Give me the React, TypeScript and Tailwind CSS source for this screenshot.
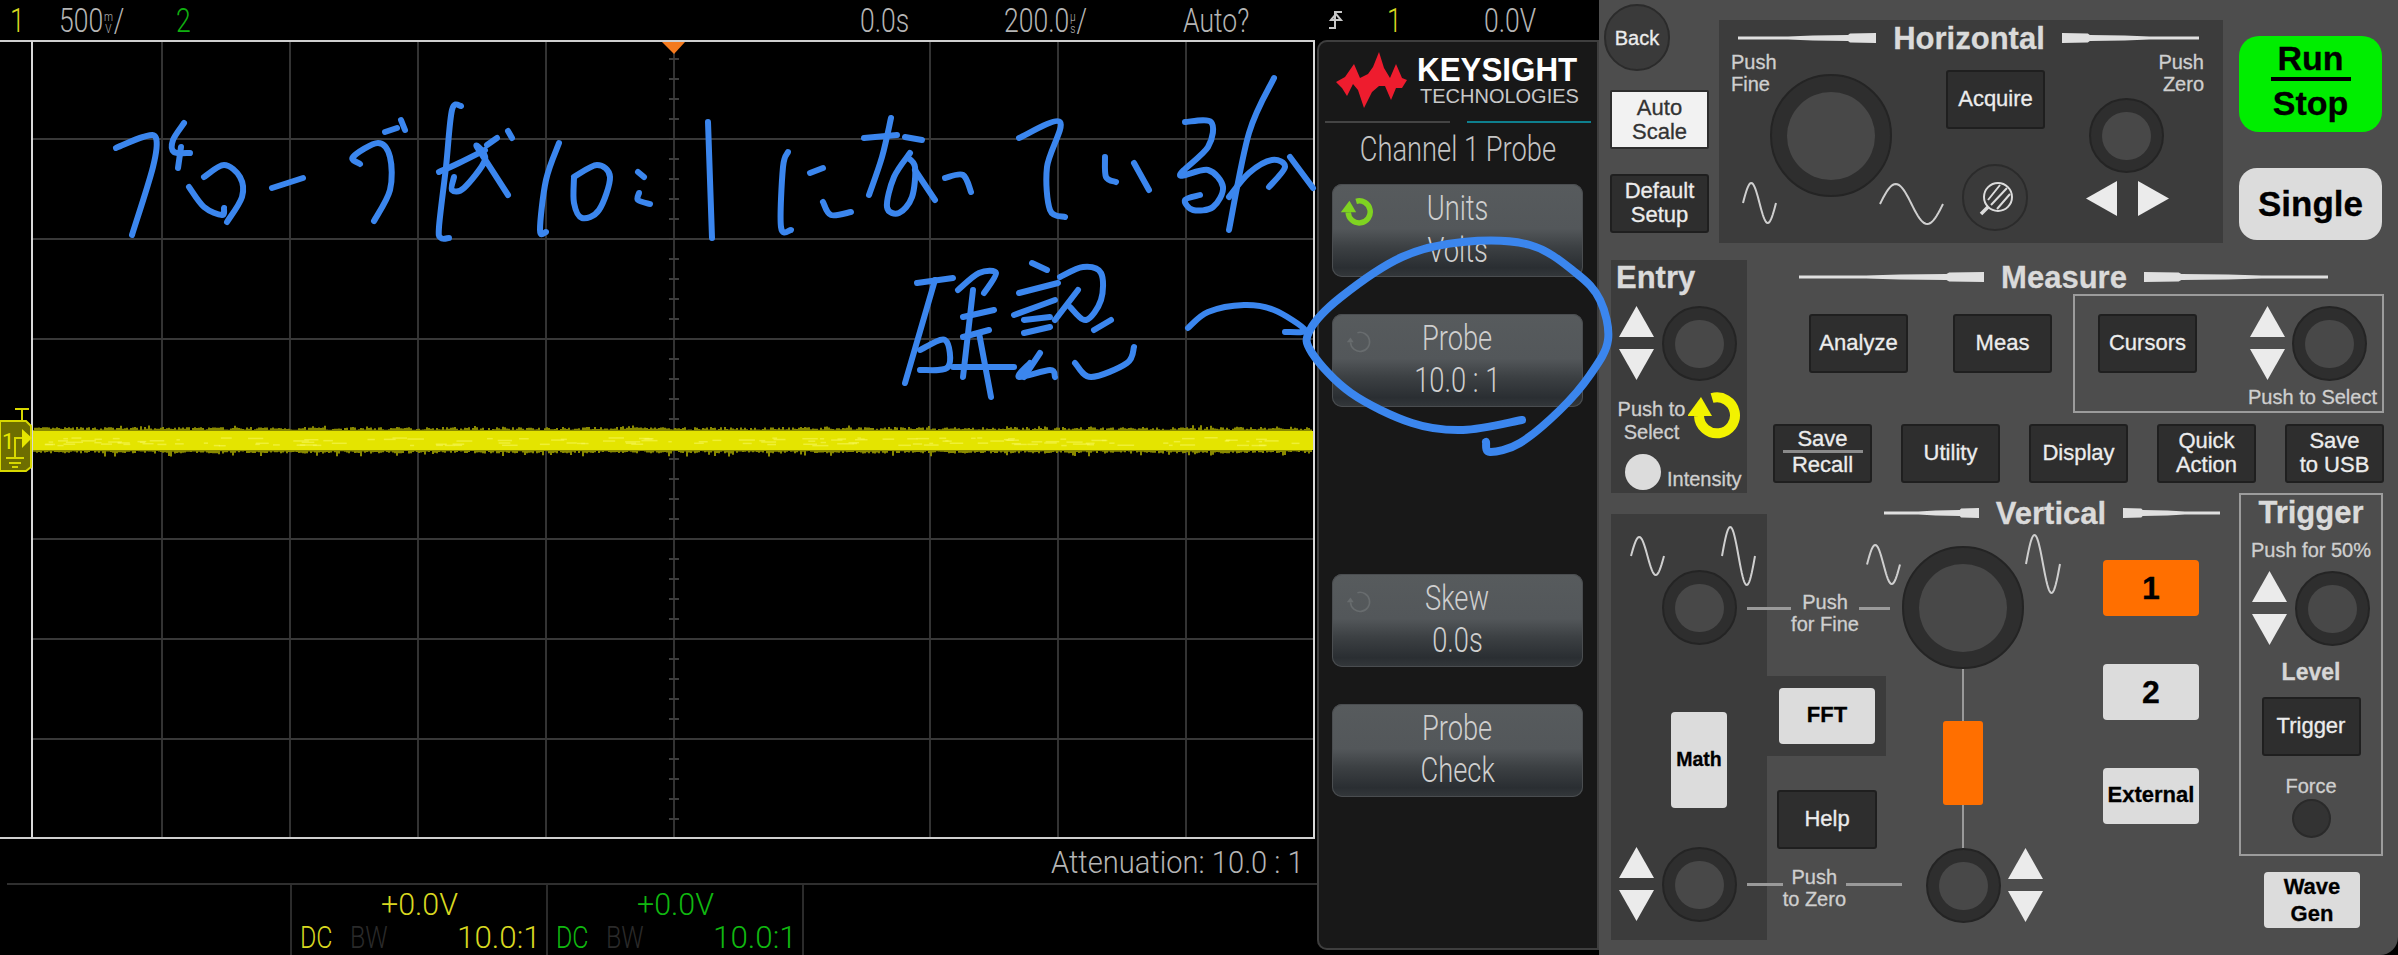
import React from "react";

const INK: number[][] = [
  [116,148,143,137,156,138,153,167,132,235],
  [184,123,173,140,174,152,190,153],[181,147,178,168],
  [189,187,204,207,222,215,224,208],[204,177,224,165,240,177,242,197,227,222],
  [272,188,303,178],
  [360,164,353,157,378,143,390,157,390,190,374,221],[385,132,397,128],[401,120,405,130],
  [461,106,452,110,446,167,439,227,441,238,449,238],
  [439,172,459,163,485,150],[454,177,452,190,464,188,485,160,477,147,508,195],[487,145,497,138],[508,131,512,138],
  [559,143,546,180,540,230,546,232],
  [574,177,597,165,610,177,599,210,582,218,574,203,574,177],
  [638,172,644,177],[639,193,638,200,650,204],
  [708,122,712,238],
  [788,152,783,167,781,227,791,230],[810,173,823,168],[823,202,831,215,851,212],
  [864,138,897,135],[891,118,882,157,869,195],
  [910,153,894,177,887,207,899,213,912,197,915,167,907,157],[915,170,935,200],[905,137,922,140],
  [945,178,963,175,971,192],
  [1019,138,1060,122,1047,167,1050,210,1065,217],
  [1105,157,1106,177,1116,182],[1134,163,1149,190],
  [1185,122,1211,122,1208,147,1180,175,1208,170,1223,187,1213,207,1193,210,1185,200,1200,195],
  [1274,78,1249,133,1229,230],[1229,197,1249,173,1272,160,1285,167,1269,187],[1290,157,1313,188],
  [917,283,953,278],[935,280,905,383],[920,350,945,340,948,367,920,370],
  [958,290,979,273,996,273,984,293],[973,290,963,377],[979,333,991,397],[963,317,994,310],[963,337,989,330],[953,367,1014,367],
  [1032,263,1047,270],[1019,293,1058,283],[1014,315,1055,300],[1024,320,1050,317],[1024,333,1050,327],
  [1030,363,1019,377,1050,370,1055,377],[1060,277,1083,267,1101,273,1101,300,1086,320,1070,307],[1078,290,1055,320],
  [1040,353,1024,377],[1075,363,1091,377,1127,363,1134,347],[1094,330,1111,320],
  [1188,328,1208,312,1244,305,1274,310,1305,330,1285,332],
];
const CIRCLE = [1522,420,1463,430,1412,423,1351,393,1312,353,1310,330,1341,297,1402,257,1463,242,1530,245,1576,273,1600,300,1608,340,1590,375,1560,410,1520,443,1490,452,1486,442];

function smooth(a: number[]) {
  const p: [number, number][] = [];
  for (let i = 0; i < a.length; i += 2) p.push([a[i], a[i + 1]]);
  let d = `M${p[0][0]} ${p[0][1]}`;
  for (let i = 0; i < p.length - 1; i++) {
    const p0 = p[Math.max(i - 1, 0)], p1 = p[i], p2 = p[i + 1], p3 = p[Math.min(i + 2, p.length - 1)];
    const c1 = [p1[0] + (p2[0] - p0[0]) / 6, p1[1] + (p2[1] - p0[1]) / 6];
    const c2 = [p2[0] - (p3[0] - p1[0]) / 6, p2[1] - (p3[1] - p1[1]) / 6];
    d += `C${c1[0]} ${c1[1]} ${c2[0]} ${c2[1]} ${p2[0]} ${p2[1]}`;
  }
  return d;
}

function Ink() {
  return (
    <svg className="absolute left-0 top-0 z-10 pointer-events-none" width={2398} height={955} fill="none" stroke="#3b86ee" strokeLinecap="round" strokeLinejoin="round">
      {INK.map((s, i) => <path key={i} d={smooth(s)} strokeWidth={6} />)}
      <path d={smooth(CIRCLE)} strokeWidth={8} />
    </svg>
  );
}

let seed = 7;
const rnd = () => { seed = (seed * 16807) % 2147483647; return seed / 2147483647; };
const NOISE = Array.from({ length: 640 }, (_, i) => ({ x: 33 + i * 2, t: 1 + rnd() * 3 + (rnd() > 0.93 ? 2 : 0), b: 1 + rnd() * 2.5 + (rnd() > 0.93 ? 3 : 0) }));
const SPECK = Array.from({ length: 150 }, () => ({ x: 40 + rnd() * 1265, y: 437 + rnd() * 8, w: 3 + rnd() * 14 }));

function Chart() {
  const vs = [162, 290, 418, 546, 930, 1058, 1186];
  const hs = [139, 239, 339, 439, 539, 639, 739];
  const ticks = Array.from({ length: 39 }, (_, i) => 59 + i * 20);
  return (
    <svg width={1317} height={800} viewBox="0 40 1317 800" className="block">
      {vs.map(x => <line key={x} x1={x} x2={x} y1={41} y2={838} stroke="#333" strokeWidth={2} />)}
      {hs.map(y => <line key={y} x1={32} x2={1313} y1={y} y2={y} stroke="#383838" strokeWidth={2} />)}
      <line x1={674} x2={674} y1={41} y2={838} stroke="#333" strokeWidth={2} />
      {ticks.map(y => <line key={y} x1={669} x2={679} y1={y} y2={y} stroke="#3c3c3c" strokeWidth={2} />)}
      {NOISE.map(n => <line key={n.x} x1={n.x} x2={n.x} y1={431 - n.t} y2={450 + n.b} stroke="#8a8a00" strokeWidth={2} />)}
      <rect x={32} y={431} width={1281} height={19} fill="#e4e400" />
      {SPECK.map((s, i) => <rect key={i} x={s.x} y={s.y} width={s.w} height={1.5} fill="#f6f65a" opacity={0.6} />)}
      <line x1={0} x2={1315} y1={41} y2={41} stroke="#cfcfcf" strokeWidth={2} />
      <line x1={0} x2={1315} y1={838} y2={838} stroke="#cfcfcf" strokeWidth={2} />
      <line x1={32} x2={32} y1={41} y2={838} stroke="#d8d8d8" strokeWidth={2} />
      <line x1={1314} x2={1314} y1={41} y2={838} stroke="#d8d8d8" strokeWidth={2} />
      <polygon points="662,42 685,42 674,54" fill="#f47a1e" />
      <g stroke="#d8d800" strokeWidth={2} fill="none">
        <line x1={15} x2={29} y1={409} y2={409} />
        <line x1={22} x2={22} y1={409} y2={422} />
        <polygon points="0,421 26,421 31,426 31,467 26,471 0,471" fill="#6e6e00" />
        <path d="M24 438H15V458M6 458H24M9 463H21M12 467H18" />
      </g>
      <polygon points="22,429 32,438 22,448" fill="#e6e600" />
      <text x={2} y={449} fontSize={22} fill="#e6e600" fontFamily="Roboto, sans-serif">1</text>
    </svg>
  );
}

function Sx({ children, className = "" }: { children: React.ReactNode; className?: string }) {
  return <span className={`inline-block origin-left scale-x-[0.78] whitespace-nowrap ${className}`}>{children}</span>;
}

function Stack({ a, b }: { a: string; b: string }) {
  return (
    <span className="inline-flex flex-col items-center text-[13px] leading-[12px] align-middle mx-[1px]">
      <span>{a}</span><span>{b}</span>
    </span>
  );
}

function TopBar() {
  return (
    <div className="flex h-[40px] w-[1599px] items-center bg-black text-[34px] font-light leading-none text-[#b5b5b5] [font-family:Roboto,sans-serif]">
      <div className="ml-[10px] w-[49px] text-[#d8d820]"><Sx>1</Sx></div>
      <div className="w-[117px]"><Sx>500<Stack a="m" b="V" />/</Sx></div>
      <div className="w-[684px] text-[#10b010]"><Sx>2</Sx></div>
      <div className="w-[144px]"><Sx>0.0s</Sx></div>
      <div className="w-[179px]"><Sx>200.0<Stack a="µ" b="s" />/</Sx></div>
      <div className="w-[145px]"><Sx>Auto?</Sx></div>
      <div className="w-[59px]">
        <svg width={16} height={22} fill="none" stroke="#c8c8c8" strokeWidth={2} className="block"><path d="M1 19H7V3H14M3 11L8 5L13 11Z" /></svg>
      </div>
      <div className="w-[97px] text-[#d8d820]"><Sx>1</Sx></div>
      <div><Sx>0.0V</Sx></div>
    </div>
  );
}

function Readout({ color, value }: { color: string; value: string }) {
  return (
    <div className="w-[256px] h-[70px] border-l-2 border-[#2b2b2b] flex flex-col text-[32px] font-light leading-none [font-family:Roboto,sans-serif]" style={{ color }}>
      <div className="h-[36px] flex items-center justify-center pt-[2px]"><span className="inline-block scale-x-[0.95]">{value}</span></div>
      <div className="flex items-center h-[32px] pl-[8px]">
        <div className="w-[50px]"><Sx>DC</Sx></div>
        <div className="w-[107px] text-[#2a2a2a]"><Sx>BW</Sx></div>
        <div><Sx className="scale-x-[0.98]">10.0:1</Sx></div>
      </div>
    </div>
  );
}

function Rotate({ color, w, h, sw, head }: { color: string; w: number; h: number; sw: number; head: boolean }) {
  return (
    <svg width={w} height={h} viewBox="0 0 54 49" fill="none" className="block">
      <path d="M24 7A18 18 0 1 1 11 25" stroke={color} strokeWidth={sw} />
      <polygon points={head ? "-1,25 24,25 13,6" : "4,25 17,25 11,16"} fill={color} />
    </svg>
  );
}

function SoftKey({ a, b, icon }: { a: string; b: string; icon?: "on" | "off" }) {
  return (
    <div className="relative h-[93px] rounded-[10px] shadow-[inset_0_0_0_1px_#4a4d50] bg-[linear-gradient(180deg,#575b5d_0%,#53575a_48%,#3c4043_68%,#2a2e32_90%,#34383b_100%)] flex flex-col items-center pt-[4px] text-[35px] font-light leading-[42px] text-[#cfcfcf] [font-family:Roboto,sans-serif]">
      {icon === "on" && <div className="absolute left-[9px] top-[13px]"><Rotate color="#7fd321" w={34} h={30} sw={9} head /></div>}
      {icon === "off" && <div className="absolute left-[12px] top-[15px]"><Rotate color="#686c6e" w={30} h={26} sw={3} head={false} /></div>}
      <span className="inline-block scale-x-[0.78]">{a}</span>
      <span className="inline-block scale-x-[0.78]">{b}</span>
    </div>
  );
}

function SoftPanel() {
  return (
    <div className="w-[282px] h-[910px] bg-[#181818] rounded-tl-[10px] rounded-bl-[10px] shadow-[inset_0_0_0_2px_#3e3e3e]">
      <div className="flex ml-[19px] pt-[12px]">
        <svg width={71} height={56} viewBox="0 0 71 56" className="block">
          <polygon fill="#ee1c2e" points="0,30 9,25 18,12 24,26 32,22 37,15 43,0 48,16 54,26 60,12 66,26 71,28 66,36 60,36 55,48 49,34 43,34 36,40 28,56 22,38 17,32 11,44 6,36" />
        </svg>
        <div className="ml-[10px] flex flex-col [font-family:'Liberation_Sans',Arial,sans-serif]">
          <div className="text-[33px] font-bold leading-[34px] text-white mt-[1px] whitespace-nowrap origin-left scale-x-[0.95]">KEYSIGHT</div>
          <div className="text-[20px] leading-[20px] text-[#c8c8c8] mt-[-1px] ml-[3px] whitespace-nowrap">TECHNOLOGIES</div>
        </div>
      </div>
      <div className="flex ml-[8px] mt-[13px] gap-[17px]">
        <div className="w-[125px] h-[2px] bg-[#444]" />
        <div className="w-[124px] h-[2px] bg-[#0e7f8e]" />
      </div>
      <div className="h-[36px] mt-[9px] flex items-center justify-center text-[35px] font-light text-[#c4c4c4] [font-family:Roboto,sans-serif]">
        <span className="inline-block scale-x-[0.78] whitespace-nowrap">Channel 1 Probe</span>
      </div>
      <div className="ml-[15px] w-[251px] mt-[16px] flex flex-col gap-[37px]">
        <SoftKey a="Units" b="Volts" icon="on" />
        <SoftKey a="Probe" b="10.0 : 1" icon="off" />
        <div className="h-[93px]" />
        <SoftKey a="Skew" b="0.0s" icon="off" />
        <SoftKey a="Probe" b="Check" />
      </div>
    </div>
  );
}

function Knob({ big }: { big?: boolean }) {
  return (
    <div className={`${big ? "w-[122px] h-[123px]" : "w-[75px] h-[75px]"} shrink-0 rounded-full bg-[#2e2e2e] border-2 border-[#242424] flex items-center justify-center`}>
      <div className={`${big ? "w-[88px] h-[88px]" : "w-[49px] h-[48px]"} rounded-full bg-[#484848]`} />
    </div>
  );
}

function Tri({ up, w = 35, h = 31 }: { up?: boolean; w?: number; h?: number }) {
  return (
    <svg width={w} height={h} viewBox="0 0 35 31" className="block shrink-0">
      <polygon points={up ? "17.5,0 35,31 0,31" : "0,0 35,0 17.5,31"} fill="#ebebeb" />
    </svg>
  );
}

function UpDown() {
  return (
    <div className="flex flex-col gap-[12px] shrink-0">
      <Tri up />
      <Tri />
    </div>
  );
}

function Taper({ w, flip }: { w: number; flip?: boolean }) {
  return (
    <svg width={w} height={12} viewBox="0 0 138 12" preserveAspectRatio="none" className={`block shrink-0 ${flip ? "-scale-x-100" : ""}`}>
      <polygon points="0,4.5 50,4.5 75,3.5 110,3 112,1.5 138,1 138,11 112,10.5 110,9 75,8.5 50,7.5 0,7.5" fill="#e0e0e0" />
    </svg>
  );
}

function Sine({ w, h }: { w: number; h: number }) {
  const pts = Array.from({ length: 41 }, (_, i) => {
    const t = i / 40;
    return `${1 + (w - 2) * t},${h / 2 - (h / 2 - 2) * Math.sin(2 * Math.PI * t)}`;
  }).join(" ");
  return (
    <svg width={w} height={h} fill="none" className="block shrink-0">
      <polyline points={pts} stroke="#cfcfcf" strokeWidth={2} />
    </svg>
  );
}

function DarkBtn({ children, className = "" }: { children: React.ReactNode; className?: string }) {
  return (
    <div className={`w-[99px] h-[59px] shrink-0 rounded-[3px] bg-[#2e2e2e] border-2 border-[#1f1f1f] flex flex-col items-center justify-center pb-[2px] text-[22px] leading-[24px] text-[#ececec] text-center ${className}`}>
      {children}
    </div>
  );
}

function LightBtn({ children, className = "" }: { children: React.ReactNode; className?: string }) {
  return (
    <div className={`w-[96px] h-[56px] shrink-0 rounded-[4px] bg-[#dcdcdc] flex flex-col items-center justify-center pb-[3px] text-center font-bold text-black ${className}`}>
      {children}
    </div>
  );
}

function Hatch() {
  return (
    <svg width={66} height={67} fill="none" stroke="#dcdcdc" className="block">
      <circle cx={34} cy={33} r={14} strokeWidth={2} />
      <path d="M24 43L17 50" strokeWidth={3.5} />
      <path d="M24 36L36 21M27 41L43 24M33 45L46 30" strokeWidth={2} />
    </svg>
  );
}

function Title({ children, className = "" }: { children: React.ReactNode; className?: string }) {
  return <div className={`text-[31px] leading-none font-bold text-[#dadada] whitespace-nowrap ${className}`}>{children}</div>;
}

function FrontPanel() {
  return (
    <div className="w-[799px] h-[955px] bg-[#4d4d4d] rounded-br-[18px] flex flex-col text-[20px] leading-[22px] text-[#cfcfcf] [-webkit-text-stroke:0.3px] [font-family:'Liberation_Sans',Arial,sans-serif]">
      {/* first row */}
      <div className="flex h-[260px] shrink-0 items-start">
        <div className="w-[120px] shrink-0 flex flex-col">
          <div className="ml-[5px] mt-[4px] w-[66px] h-[67px] rounded-full bg-[#3a3a3a] border-2 border-[#2b2b2b] flex items-center justify-center text-[#ececec]">Back</div>
          <div className="ml-[11px] mt-[19px] w-[99px] h-[59px] rounded-[2px] bg-[#f2f2f2] border-2 border-[#2e2e2e] flex flex-col items-center justify-center text-[22px] leading-[24px] text-[#333]">
            <span>Auto</span><span>Scale</span>
          </div>
          <DarkBtn className="ml-[11px] mt-[25px]"><span>Default</span><span>Setup</span></DarkBtn>
        </div>
        <div className="w-[504px] h-[223px] mt-[20px] shrink-0 bg-[#3c3c3c]">
          <div className="ml-[19px] w-[461px] h-[36px] flex items-center justify-between">
            <Taper w={138} /><Title>Horizontal</Title><Taper w={137} flip />
          </div>
          <div className="flex items-start">
            <div className="ml-[12px] w-[46px] shrink-0 mt-[-5px]">
              <div>Push</div><div>Fine</div>
              <div className="ml-[11px] mt-[86px]"><Sine w={35} h={44} /></div>
            </div>
            <div className="ml-[-7px] mt-[18px]"><Knob big /></div>
            <div className="ml-[-13px] mt-[126px]"><Sine w={65} h={44} /></div>
            <div className="ml-[2px] flex flex-col mt-[14px]">
              <DarkBtn>Acquire</DarkBtn>
              <div className="ml-[16px] mt-[35px] w-[66px] h-[67px] rounded-full bg-[#3a3a3a] border-2 border-[#2b2b2b] flex items-center justify-center overflow-hidden"><Hatch /></div>
            </div>
            <div className="ml-[44px] w-[115px] flex flex-col mt-[-5px]">
              <div className="text-right">Push</div>
              <div className="text-right">Zero</div>
              <div className="mt-[3px]"><Knob /></div>
              <div className="flex mt-[8px] ml-[-3px] gap-[21px]">
                <svg width={31} height={35} className="block"><polygon points="0,17.5 31,0 31,35" fill="#ebebeb" /></svg>
                <svg width={31} height={35} className="block"><polygon points="31,17.5 0,0 0,35" fill="#ebebeb" /></svg>
              </div>
            </div>
          </div>
        </div>
        <div className="ml-[16px] flex flex-col w-[143px] shrink-0">
          <div className="mt-[36px] h-[96px] rounded-[20px] bg-[#00ee00] flex flex-col items-center font-bold text-black text-[34px] leading-[38px]">
            <span className="mt-[3px]">Run</span>
            <div className="w-[80px] h-[4px] bg-black" />
            <span className="mt-[3px]">Stop</span>
          </div>
          <div className="mt-[36px] h-[72px] rounded-[18px] bg-[#dcdcdc] flex items-center justify-center font-bold text-black text-[35px]">Single</div>
        </div>
      </div>

      {/* second row */}
      <div className="flex h-[233px] shrink-0 items-start">
        <div className="ml-[12px] w-[136px] h-[233px] shrink-0 bg-[#3c3c3c] flex flex-col">
          <Title className="ml-[5px] mt-[2px] h-[32px]">Entry</Title>
          <div className="flex items-start mt-[12px] ml-[8px]">
            <UpDown />
            <div className="ml-[8px]"><Knob /></div>
          </div>
          <div className="flex items-start mt-[10px] ml-[4px]">
            <div className="w-[73px] mt-[7px] text-center leading-[23px]"><div className="whitespace-nowrap">Push to</div><div>Select</div></div>
            <Rotate color="#f2f200" w={54} h={49} sw={10} head />
          </div>
          <div className="flex items-end mt-[10px] ml-[14px]">
            <div className="w-[36px] h-[36px] rounded-full bg-[#dcdcdc]" />
            <span className="ml-[6px]">Intensity</span>
          </div>
        </div>
        <div className="ml-[26px] w-[612px] shrink-0 flex flex-col">
          <div className="ml-[26px] w-[529px] h-[34px] flex items-center justify-between">
            <Taper w={185} /><Title>Measure</Title><Taper w={184} flip />
          </div>
          <div className="flex items-start">
            <DarkBtn className="ml-[36px] mt-[20px]">Analyze</DarkBtn>
            <DarkBtn className="ml-[45px] mt-[20px]">Meas</DarkBtn>
            <div className="ml-[21px] w-[311px] h-[119px] shrink-0 border-2 border-[#9c9c9c] flex items-start">
              <DarkBtn className="ml-[23px] mt-[18px]">Cursors</DarkBtn>
              <div className="ml-[51px] flex flex-col mt-[10px]">
                <div className="flex items-start ml-[2px]">
                  <UpDown />
                  <div className="ml-[7px]"><Knob /></div>
                </div>
                <div className="mt-[5px] whitespace-nowrap">Push to Select</div>
              </div>
            </div>
          </div>
          <div className="flex gap-[29px] mt-[11px]">
            <DarkBtn>
              <span className="leading-[22px]">Save</span>
              <div className="w-[80px] h-[3px] bg-[#8a8a8a] shrink-0" />
              <span className="leading-[24px]">Recall</span>
            </DarkBtn>
            <DarkBtn>Utility</DarkBtn>
            <DarkBtn>Display</DarkBtn>
            <DarkBtn><span>Quick</span><span>Action</span></DarkBtn>
            <DarkBtn><span>Save</span><span>to USB</span></DarkBtn>
          </div>
        </div>
      </div>

      {/* third row */}
      <div className="flex items-start">
        <div className="ml-[12px] mt-[21px] w-[156px] h-[426px] shrink-0 bg-[#3c3c3c] flex flex-col">
          <div className="flex items-start ml-[19px] mt-[11px]">
            <div className="mt-[10px]"><Sine w={35} h={42} /></div>
            <div className="ml-[56px]"><Sine w={35} h={62} /></div>
          </div>
          <div className="ml-[51px] mt-[-17px]"><Knob /></div>
          <LightBtn className="!w-[56px] !h-[96px] ml-[60px] mt-[67px] text-[19.5px]">Math</LightBtn>
          <div className="flex items-start ml-[8px] mt-[39px]">
            <UpDown />
            <div className="ml-[8px]"><Knob /></div>
          </div>
        </div>

        <div className="w-[431px] shrink-0 flex flex-col">
          <div className="ml-[117px] w-[336px] h-[40px] flex items-center justify-between">
            <Taper w={95} /><Title>Vertical</Title><Taper w={97} flip />
          </div>
          <div className="flex items-start ml-[-20px]">
            <div className="w-[155px] shrink-0 flex flex-col">
              <div className="flex items-start mt-[58px] h-[44px]">
                <div className="w-[44px] h-[3px] bg-[#9a9a9a] mt-[16px]" />
                <div className="w-[68px] text-center whitespace-nowrap"><div>Push</div><div>for Fine</div></div>
                <div className="w-[31px] h-[3px] bg-[#9a9a9a] mt-[16px]" />
              </div>
              <div className="ml-[20px] mt-[41px] w-[119px] h-[80px] bg-[#3c3c3c] pt-[12px] pl-[12px]">
                <LightBtn className="text-[22px]">FFT</LightBtn>
              </div>
              <DarkBtn className="ml-[30px] mt-[34px] !w-[100px]">Help</DarkBtn>
              <div className="flex items-start mt-[17px] h-[44px]">
                <div className="w-[44px] h-[3px] bg-[#9a9a9a] mt-[17px]" />
                <div className="w-[68px] text-center whitespace-nowrap"><div>Push</div><div>to Zero</div></div>
                <div className="w-[56px] h-[3px] bg-[#9a9a9a] mt-[17px] shrink-0" />
              </div>
            </div>
            <div className="ml-[-36px] w-[195px] shrink-0 flex flex-col">
              <div className="flex items-start">
                <div className="mt-[10px]"><Sine w={35} h={43} /></div>
                <div className="ml-[1px] mt-[13px]"><Knob big /></div>
                <div className="ml-[1px]"><Sine w={36} h={62} /></div>
              </div>
              <div className="ml-[36px] w-[122px] flex flex-col items-center">
                <div className="w-[2px] h-[52px] bg-[#9a9a9a]" />
                <div className="w-[40px] h-[84px] rounded-[3px] bg-[#ff6f00]" />
                <div className="w-[2px] h-[43px] bg-[#9a9a9a]" />
              </div>
              <div className="flex items-start ml-[60px]">
                <Knob />
                <div className="ml-[7px]"><UpDown /></div>
              </div>
            </div>
            <div className="ml-[42px] mt-[27px] flex flex-col gap-[48px]">
              <LightBtn className="!bg-[#ff6f00] text-[32px] !pb-0">1</LightBtn>
              <LightBtn className="text-[32px] !pb-0">2</LightBtn>
              <LightBtn className="text-[22px]">External</LightBtn>
            </div>
          </div>
        </div>

        <div className="ml-[41px] flex flex-col shrink-0">
          <div className="w-[144px] h-[363px] border-2 border-[#9c9c9c] flex flex-col items-center">
            <Title className="mt-[2px]">Trigger</Title>
            <div className="mt-[11px] whitespace-nowrap">Push for 50%</div>
            <div className="flex items-start mt-[10px]">
              <UpDown />
              <div className="ml-[8px]"><Knob /></div>
            </div>
            <div className="text-[23px] font-bold text-[#d6d6d6] mt-[15px]">Level</div>
            <DarkBtn className="mt-[14px]">Trigger</DarkBtn>
            <div className="mt-[19px]">Force</div>
            <div className="mt-[2px] w-[39px] h-[39px] rounded-full bg-[#333] border-2 border-[#2a2a2a]" />
          </div>
          <LightBtn className="ml-[25px] mt-[16px] text-[22px] leading-[27px] !pb-0"><span>Wave</span><span>Gen</span></LightBtn>
        </div>
      </div>
    </div>
  );
}

export default function App() {
  return (
    <div className="relative flex w-[2398px] h-[955px] overflow-hidden bg-black">
      <div className="w-[1599px] shrink-0 flex flex-col">
        <TopBar />
        <div className="flex">
          <div className="w-[1317px] shrink-0 flex flex-col">
            <Chart />
            <div className="h-[43px] flex items-center justify-end pr-[13px] text-[32px] font-light text-[#b5b5b5] [font-family:Roboto,sans-serif]">
              <span className="inline-block origin-right scale-x-[0.91] whitespace-nowrap">Attenuation: 10.0 : 1</span>
            </div>
            <div className="ml-[7px] h-[2px] bg-[#2f2f2f]" />
            <div className="flex pl-[290px]">
              <Readout color="#d8d820" value="+0.0V" />
              <Readout color="#10b810" value="+0.0V" />
              <div className="border-l-2 border-[#2b2b2b] h-[70px]" />
            </div>
          </div>
          <SoftPanel />
        </div>
      </div>
      <FrontPanel />
      <Ink />
    </div>
  );
}
